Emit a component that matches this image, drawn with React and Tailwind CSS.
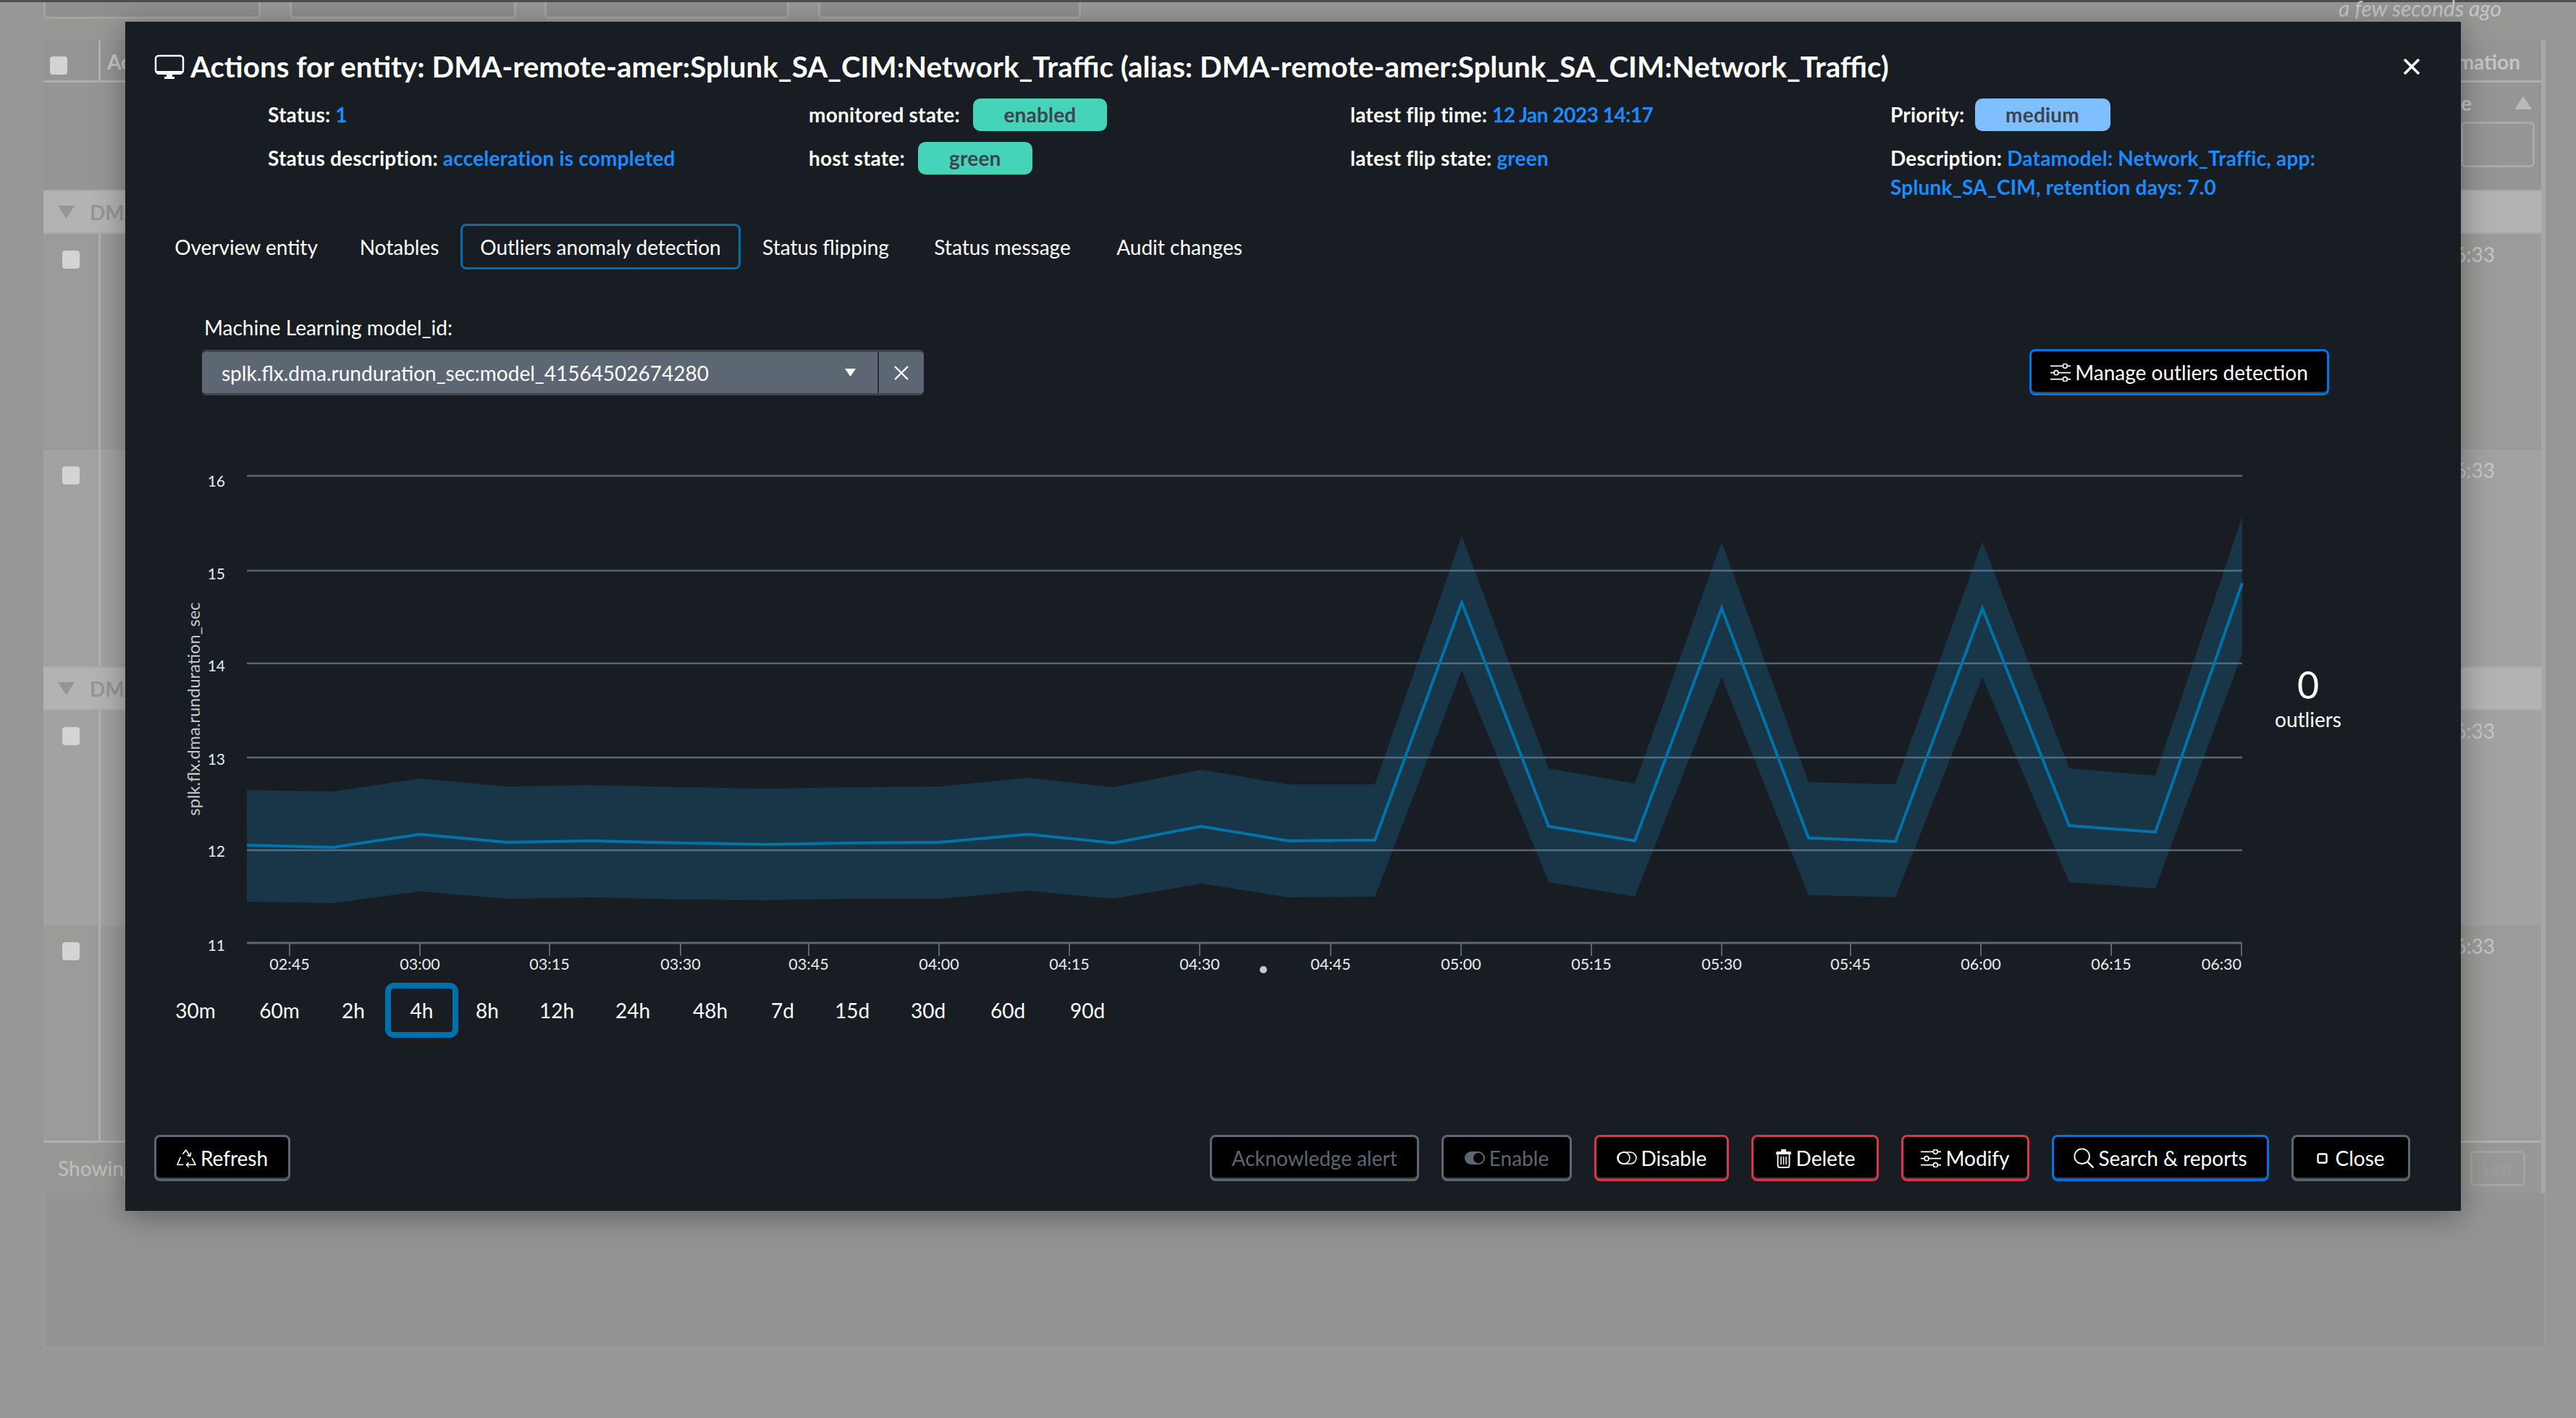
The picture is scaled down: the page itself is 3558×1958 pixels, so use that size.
import React from "react";

const xs = [341, 460, 580, 700, 819, 939, 1058, 1178, 1298, 1420, 1538, 1659, 1779, 1899, 2019, 2139, 2258, 2378, 2498, 2618, 2738, 2858, 2977, 3097];
const upper = [1089, 1091, 1073, 1084, 1082, 1085, 1087, 1085, 1084, 1072, 1085, 1061, 1081, 1081, 738, 1059, 1080, 746, 1078, 1081, 746, 1059, 1069, 711];
const mid = [1165, 1168, 1150, 1161, 1159, 1162, 1164, 1162, 1161, 1150, 1162, 1139, 1159, 1158, 830, 1139, 1159, 838, 1155, 1160, 838, 1138, 1147, 803];
const lower = [1243, 1245, 1229, 1239, 1237, 1240, 1241, 1239, 1239, 1228, 1239, 1218, 1237, 1236, 924, 1216, 1236, 933, 1234, 1237, 933, 1216, 1225, 900];

const pts = (ys) => xs.map((x, i) => `${x},${ys[i]}`);
const bandPts = [...pts(upper), ...pts(lower).reverse()].join(" ");

const gridY = [
  { y: 655, t: 16, ly: 670 },
  { y: 786, t: 15, ly: 798 },
  { y: 914, t: 14, ly: 925 },
  { y: 1044, t: 13, ly: 1054 },
  { y: 1172, t: 12, ly: 1181 },
  { y: 1300, t: 11, ly: 1311 },
];

const ticks = [
  [400, "02:45"], [580, "03:00"], [759, "03:15"], [940, "03:30"],
  [1117, "03:45"], [1297, "04:00"], [1477, "04:15"], [1657, "04:30"],
  [1838, "04:45"], [2018, "05:00"], [2198, "05:15"], [2378, "05:30"],
  [2556, "05:45"], [2736, "06:00"], [2916, "06:15"], [3096, "06:30"],
];

const ranges = [
  ["30m", "w-[116px]"], ["60m", "w-[116px]"], ["2h", "w-[88px]"],
  ["4h", "w-[101px] border-[8px] border-[#0070ad] rounded-[12px]"],
  ["8h", "w-[80px]"], ["12h", "w-[112px]"], ["24h", "w-[98px]"], ["48h", "w-[116px]"],
  ["7d", "w-[84px]"], ["15d", "w-[108px]"], ["30d", "w-[102px]"], ["60d", "w-[118px]"], ["90d", "w-[102px]"],
];

const tabs = [
  ["Overview entity", "w-[254px]"],
  ["Notables", "w-[169px]"],
  ["Outliers anomaly detection", "w-[387px] border-[3px] border-[#0070ad] rounded-lg"],
  ["Status flipping", "w-[235px]"],
  ["Status message", "w-[253px]"],
  ["Audit changes", "w-[236px]"],
];

const MonitorIcon = () => (
  <svg width="42" height="34" viewBox="0 0 42 34" fill="none" className="shrink-0">
    <path d="M6 2h30a4 4 0 0 1 4 4v16a4 4 0 0 1-4 4H6a4 4 0 0 1-4-4V6a4 4 0 0 1 4-4z" stroke="#fff" strokeWidth="2.5" />
    <path d="M3 23h36v2a3 3 0 0 1-3 3H6a3 3 0 0 1-3-3z" fill="#fff" />
    <path d="M17 28h8v3h3v3H14v-3h3z" fill="#fff" />
  </svg>
);

const SlidersIcon = () => (
  <svg width="28" height="25" viewBox="0 0 84 75" fill="none" stroke="#fff" strokeWidth="5" className="shrink-0">
    <path d="M0 10h51M71 10h13M0 38h14M34 38h50M0 65h51M71 65h13" />
    <circle cx="61" cy="10" r="9" />
    <circle cx="24" cy="38" r="9" />
    <circle cx="61" cy="65" r="9" />
  </svg>
);

const RecycleIcon = () => (
  <svg width="27" height="25" viewBox="0 0 80 74" fill="none" stroke="#fff" strokeWidth="5" strokeLinecap="round" strokeLinejoin="round" className="shrink-0">
    <path d="M26 18 38 3l16 24M44 25l11 3 3-13" />
    <path d="M15 34 3 63h22" />
    <path d="M64 38l13 25H40M48 55l-8 8 8 8" />
  </svg>
);

const ToggleOnIcon = () => (
  <svg width="28" height="18" viewBox="0 0 28 18" className="shrink-0">
    <rect x="0" y="0" width="28" height="18" rx="9" fill="#5c6773" />
    <circle cx="19" cy="9" r="7" fill="#000" />
  </svg>
);

const ToggleOffIcon = () => (
  <svg width="28" height="18" viewBox="0 0 28 18" fill="none" stroke="#fff" strokeWidth="1.6" className="shrink-0">
    <rect x="1" y="1" width="26" height="16" rx="8" />
    <circle cx="10" cy="9" r="8" />
  </svg>
);

const TrashIcon = () => (
  <svg width="23" height="27" viewBox="0 0 23 27" fill="none" className="shrink-0">
    <path d="M1 6a2 2 0 0 1 2-2h5V2a1 1 0 0 1 1-1h5a1 1 0 0 1 1 1v2h5a2 2 0 0 1 2 2v2H1z" fill="#fff" />
    <path d="M3.5 8v15a3 3 0 0 0 3 3h10a3 3 0 0 0 3-3V8" stroke="#fff" strokeWidth="1.8" />
    <path d="M8 11v11M11.5 11v11M15 11v11" stroke="#fff" strokeWidth="1.5" />
  </svg>
);

const SearchIcon = () => (
  <svg width="28" height="28" viewBox="0 0 84 84" fill="none" stroke="#fff" strokeWidth="5.5" className="shrink-0">
    <circle cx="35" cy="35" r="31" />
    <path d="M58 58l24 24" strokeWidth="7" />
  </svg>
);

const SquareIcon = () => (
  <svg width="15" height="15" viewBox="0 0 15 15" fill="none" stroke="#fff" strokeWidth="2.4" className="shrink-0 mr-[4px]">
    <rect x="1.5" y="1.5" width="12" height="12" rx="2" />
  </svg>
);

const Btn = ({ width, border, text = "text-white", icon, children }) => (
  <button className={`${width} ${border} ${text} h-[64px] bg-black border-[3px] rounded-lg flex items-center justify-center gap-[6px] text-[28px] font-normal shadow-[inset_0_-2px_0_#3c434b]`}>
    {icon}
    {children}
  </button>
);

const Label = ({ children }) => <span className="font-bold text-white mr-[7px]">{children}</span>;
const Value = ({ children }) => <span className="font-bold text-[#1a8cff]">{children}</span>;

const Badge = ({ width, color, children }) => (
  <span className={`${width} ${color} h-[45px] ml-[18px] rounded-[10px] flex items-center justify-center text-[#3c444d] font-bold`}>
    {children}
  </span>
);

const Chart = () => (
  <svg viewBox="173 620 3226 730" className="block w-[3226px] h-[730px] mt-[76px]">
    {gridY.map((g) => (
      <line key={g.t} x1="341" x2="3097" y1={g.y} y2={g.y} stroke="#5c6670" strokeWidth={g.t === 11 ? 3 : 2.5} />
    ))}
    {ticks.map(([x]) => (
      <line key={x} x1={x} x2={x} y1="1300" y2="1318" stroke="#5c6670" strokeWidth="2" />
    ))}
    <polygon points={bandPts} fill="#2296e1" fillOpacity="0.2" />
    <polyline points={pts(mid).join(" ")} fill="none" stroke="#0073a8" strokeWidth="4" />
    {gridY.map((g) => (
      <text key={g.t} x="311" y={g.ly} textAnchor="end" fill="#e8ebee" fontSize="21" fontFamily="Lato, sans-serif">{g.t}</text>
    ))}
    {ticks.map(([x, t], i) => (
      <text key={t} x={x} y="1337" textAnchor={i === ticks.length - 1 ? "end" : "middle"} fill="#e8ebee" fontSize="21.5" fontFamily="Lato, sans-serif">{t}</text>
    ))}
    <text x="269" y="977" transform="rotate(-90 269 977) translate(0 7)" textAnchor="middle" fill="#c3c9cf" fontSize="23.6" fontFamily="Lato, sans-serif">
      splk.flx.dma.runduration_sec
    </text>
    <circle cx="1745" cy="1337" r="5" fill="#c3c9cf" />
  </svg>
);

const Checkbox = () => <div className="w-[24px] h-[25px] rounded-[4px] bg-[#d4d4d4]" />;

const Row = ({ bg, height, time }) => (
  <div className={`${bg} ${height} flex`}>
    <div className="w-[79px] border-r-[3px] border-[#b2b2b0] flex justify-center pt-[23px]">
      <Checkbox />
    </div>
    <div className="flex-1 flex justify-end pr-[64px] pt-[7px] text-[28px] text-[#c6c6c6]">{time}</div>
  </div>
);

const GroupRow = ({ height }) => (
  <div className={`${height} bg-[#b3b3b3] border-y-[2px] border-[#a9a9a9] flex items-center pl-[20px] gap-[21px] text-[28px] font-bold text-[#959595]`}>
    <svg width="23" height="18" viewBox="0 0 23 18"><path d="M0 0h23L11.5 18z" fill="#959595" /></svg>
    DMA-remote-amer
  </div>
);

const Backdrop = () => (
  <div className="h-full flex flex-col text-[#c6c6c6] bg-[#979796]">
    <div className="h-[3px] bg-[#4b4d50]" />
    <div className="relative h-[53px]">
      <div className="flex">
        <div className="ml-[60px] w-[300px] h-[23px] bg-[#8f8f8f] border-x-[3px] border-b-[3px] border-[#a4a4a4] rounded-b-md" />
        <div className="ml-[40px] w-[313px] h-[23px] bg-[#8f8f8f] border-x-[3px] border-b-[3px] border-[#a4a4a4] rounded-b-md" />
        <div className="ml-[39px] w-[338px] h-[23px] bg-[#8f8f8f] border-x-[3px] border-b-[3px] border-[#a4a4a4] rounded-b-md" />
        <div className="ml-[40px] w-[363px] h-[23px] bg-[#8f8f8f] border-x-[3px] border-b-[3px] border-[#a4a4a4] rounded-b-md" />
        <span className="ml-auto mr-[103px] -mt-[10px] text-[30px] leading-[36px] italic text-[#c6c6c6]">a few seconds ago</span>
      </div>
    </div>
    <div className="ml-[60px] w-[3456px] border-r-[6px] border-[#a8a8a8]">
      <div className="h-[58px] bg-[#959595] border-b-[3px] border-[#b0b0b0] flex">
        <div className="w-[79px] border-r-[3px] border-[#b2b2b0] flex justify-start pl-[9px] pt-[22px]"><Checkbox /></div>
        <div className="flex-1 flex justify-between pl-[9px] pr-[29px] pt-[8px] text-[28px] font-bold">
          <span>Actions</span>
          <span>Information</span>
        </div>
      </div>
      <div className="h-[148px] bg-[#959595] flex justify-end pr-[9px] pt-[12px]">
        <div className="w-[102px] flex flex-col gap-[10px]">
          <div className="flex justify-between items-center">
            <span className="text-[28px] font-bold leading-[32px]">e</span>
            <svg width="24" height="18" viewBox="0 0 24 18" className="mr-[4px]"><path d="M0 18h24L12 0z" fill="#b9b9b9" /></svg>
          </div>
          <div className="h-[63px] border-[3px] border-[#aaaaaa] rounded-md" />
        </div>
      </div>
      <GroupRow height="h-[61px]" />
      <Row bg="bg-[#9b9b99]" height="h-[298px]" time="16:33" />
      <Row bg="bg-[#a2a2a2]" height="h-[299px]" time="16:33" />
      <GroupRow height="h-[61px]" />
      <Row bg="bg-[#a2a2a2]" height="h-[297px]" time="16:33" />
      <Row bg="bg-[#9b9b99]" height="h-[297px]" time="16:33" />
      <div className="h-[73px] border-t-[3px] border-[#b0b0b0] flex items-center justify-between pl-[20px] pr-[22px] bg-[#979796]">
        <span className="text-[28px] font-medium text-[#bdbdbd]">Showing 1 to 4 of 4 entries</span>
        <span className="w-[76px] h-[49px] border-[3px] border-[#a4a4a4] rounded-md flex items-center justify-center text-[22px] font-bold text-[#9c9c9c]">Last</span>
      </div>
    </div>
    <div className="ml-[60px] w-[3456px] h-[214px] border-x-[2px] border-b-[2px] border-[#9c9c9c] bg-[#949494]" />
  </div>
);

const App = () => {
  return (
    <div className="relative w-[3558px] h-[1958px] overflow-hidden font-[Lato,sans-serif]">
      <Backdrop />

      {/* modal */}
      <div className="absolute left-[173px] top-[30px] w-[3226px] h-[1642px] bg-[#171d22] shadow-[0_8px_40px_rgba(0,0,0,0.35)] flex flex-col text-white">
        <div className="flex items-center justify-between pl-[40px] pr-[56px] pt-[40px] h-[84px]">
          <div className="flex items-center gap-[8px] text-[40.3px] leading-[44px] font-bold">
            <MonitorIcon />
            <span>Actions for entity: DMA-remote-amer:Splunk_SA_CIM:Network_Traffic (alias: DMA-remote-amer:Splunk_SA_CIM:Network_Traffic)</span>
          </div>
          <svg width="24" height="24" viewBox="0 0 24 24" stroke="#fff" strokeWidth="3.6" className="shrink-0"><path d="M2 2l20 20M22 2 2 22" /></svg>
        </div>

        <div className="grid grid-cols-[747px_748px_746px_1fr] ml-[197px] mt-[14px] text-[28px] tracking-[0.2px]">
          <div className="h-[60px] flex items-center"><Label>Status:</Label><Value>1</Value></div>
          <div className="h-[60px] flex items-center"><span className="font-bold">monitored state:</span><Badge width="w-[185px]" color="bg-[#45d4ba]">enabled</Badge></div>
          <div className="h-[60px] flex items-center"><Label>latest flip time:</Label><span className="font-bold text-[#1a8cff] tracking-[-0.5px]">12 Jan 2023 14:17</span></div>
          <div className="h-[60px] flex items-center"><span className="font-bold -mr-[4px]">Priority:</span><Badge width="w-[187px]" color="bg-[#7fbfff]">medium</Badge></div>
          <div className="pt-[10px] leading-[40px]"><Label>Status description:</Label><Value>acceleration is completed</Value></div>
          <div className="h-[60px] flex items-center"><span className="font-bold">host state:</span><Badge width="w-[158px]" color="bg-[#45d4ba]">green</Badge></div>
          <div className="pt-[10px] leading-[40px]"><Label>latest flip state:</Label><Value>green</Value></div>
          <div className="pt-[10px] leading-[40px] w-[620px]"><Label>Description:</Label><Value>Datamodel: Network_Traffic, app: Splunk_SA_CIM, retention days: 7.0</Value></div>
        </div>

        <div className="flex ml-[40px] mt-[31px] text-[28px]">
          {tabs.map(([t, cls]) => (
            <div key={t} className={`${cls} h-[63px] flex items-center justify-center`}>{t}</div>
          ))}
        </div>

        <div className="flex items-end justify-between pl-[106px] pr-[182px] mt-[60px]">
          <div className="flex flex-col gap-[11px]">
            <div className="pl-[3px] text-[28px] leading-[40px]">Machine Learning model_id:</div>
            <div className="flex w-[997px] h-[63px] bg-[#5c6773] border-y-[3px] border-[#3c444d] rounded-md text-[28px]">
              <div className="flex-1 flex items-center justify-between pl-[27px] pr-[30px] border-r-[2px] border-[#2a3036]">
                <span>splk.flx.dma.runduration_sec:model_41564502674280</span>
                <svg width="15" height="11" viewBox="0 0 15 11"><path d="M0 0h15L7.5 11z" fill="#fff" /></svg>
              </div>
              <div className="w-[62px] flex items-center justify-center">
                <svg width="22" height="22" viewBox="0 0 22 22" stroke="#fff" strokeWidth="2.4"><path d="M2 2l18 18M20 2 2 20" /></svg>
              </div>
            </div>
          </div>
          <Btn width="w-[414px]" border="border-[#0073e6]" icon={<SlidersIcon />}>Manage outliers detection</Btn>
        </div>

        <div className="relative">
          <Chart />
          <div className="absolute left-[2975px] top-[374px] w-[80px] flex flex-col items-center">
            <span className="text-[52px] leading-[50px] font-normal">0</span>
            <span className="text-[28px] leading-[36px] mt-[5px]">outliers</span>
          </div>
        </div>

        <div className="flex items-center ml-[39px] mt-[5px] text-[28px]">
          {ranges.map(([t, cls]) => (
            <div key={t} className={`${cls} h-[76px] flex items-center justify-center shrink-0`}>{t}</div>
          ))}
        </div>

        <div className="mt-auto mb-[41px] flex justify-between pl-[40px] pr-[70px]">
          <Btn width="w-[188px]" border="border-[#5c6773]" icon={<RecycleIcon />}>Refresh</Btn>
          <div className="flex gap-[31px]">
            <Btn width="w-[289px]" border="border-[#5c6773]" text="text-[#5c6773]">Acknowledge alert</Btn>
            <Btn width="w-[180px]" border="border-[#5c6773]" text="text-[#5c6773]" icon={<ToggleOnIcon />}>Enable</Btn>
            <Btn width="w-[186px]" border="border-[#dc3545]" icon={<ToggleOffIcon />}>Disable</Btn>
            <Btn width="w-[176px]" border="border-[#dc3545]" icon={<TrashIcon />}>Delete</Btn>
            <Btn width="w-[177px]" border="border-[#dc3545]" icon={<SlidersIcon />}>Modify</Btn>
            <Btn width="w-[300px]" border="border-[#0073e6]" icon={<SearchIcon />}>Search &amp; reports</Btn>
            <Btn width="w-[164px]" border="border-[#5c6773]" icon={<SquareIcon />}>Close</Btn>
          </div>
        </div>
      </div>
    </div>
  );
};

export default App;
